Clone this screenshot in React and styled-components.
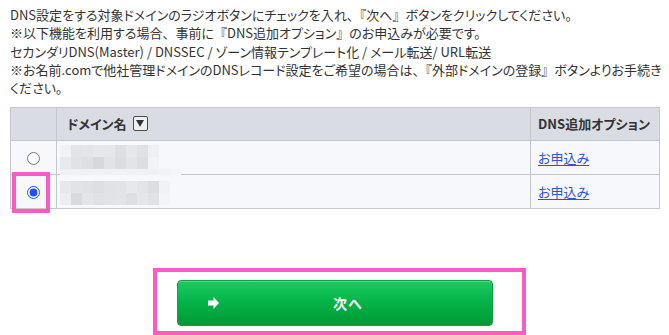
import React from "react";
import styled, { createGlobalStyle } from "styled-components";

const Global = createGlobalStyle`
  html, body { margin: 0; padding: 0; background: #fff; }
  body {
    font-family: "Noto Sans CJK JP", "Noto Sans", sans-serif;
    color: #333;
    font-feature-settings: "palt";
  }
`;

const Page = styled.div`
  width: 650px;
  padding: 6px 9px 0 10px;
`;

const Intro = styled.div`
  width: 652px;
  font-size: 13px;
  line-height: 18.3px;
  margin-bottom: 9.5px;
`;

const FullWidth = styled.span`
  font-feature-settings: normal;
`;

const Table = styled.table`
  width: 650px;
  border-collapse: collapse;
  table-layout: fixed;
  font-size: 13px;
`;

const HeadCell = styled.th`
  background: #d9dde3;
  border: 1px solid #c4c7cc;
  height: 33px;
  padding: 0 ${(p) => p.$pad || 9}px;
  text-align: left;
  font-weight: 700;
  color: #333;
  box-sizing: border-box;
  white-space: nowrap;
`;

const Cell = styled.td`
  background: #f6f8fb;
  border: 1px solid #c4c7cc;
  height: 33px;
  padding: 0 ${(p) => p.$pad ?? 9}px;
  position: relative;
  text-align: ${(p) => p.$center ? "center" : "left"};
  box-sizing: border-box;
  vertical-align: middle;
`;

const HeadLabel = styled.span`
  display: inline-flex;
  align-items: center;
  gap: 6px;
`;

const SortBox = styled.span`
  display: inline-flex;
  width: 15px;
  height: 15px;
  box-sizing: border-box;
  border: 1.5px solid #4a4a4a;
  border-radius: 2px;
  align-items: center;
  justify-content: center;
  background: #eef0f3;
`;

const Radio = styled.input`
  margin: 0;
  width: 13px;
  height: 13px;
  accent-color: #2250f4;
  vertical-align: middle;
  position: relative;
  top: -1px;
`;

const Highlight = styled.div`
  position: absolute;
  left: 1px;
  top: -3px;
  width: 38px;
  height: 41px;
  box-sizing: border-box;
  border: 4px solid #fb5bc5;
  pointer-events: none;
`;

const Mosaic = styled.div`
  display: flex;
  flex-direction: column;
  margin-top: ${(p) => p.$top}px;
  margin-bottom: ${(p) => p.$bottom}px;
  position: relative;
`;

const MosaicRow = styled.div`
  display: flex;
  height: ${(p) => p.$h}px;
`;

const Tile = styled.div`
  width: ${(p) => p.$w || 11}px;
  height: 100%;
`;

const ApplyLink = styled.a`
  color: #2f54d8;
  text-decoration: underline;
  text-underline-offset: 2px;
  cursor: pointer;
`;

const ButtonArea = styled.div`
  display: flex;
  justify-content: center;
  margin-top: 59px;
  padding-left: 9px;
`;

const Frame = styled.div`
  border: 4px solid #fb5bc5;
  padding: 8px 29px 5px 20px;
`;

const NextButton = styled.button`
  width: 316px;
  height: 46px;
  display: grid;
  grid-template-columns: 11px 1fr;
  align-items: center;
  padding: 0 15px 0 30px;
  border: 1px solid #0ea043;
  border-radius: 4px;
  background: linear-gradient(#1ecb61 0%, #05b54a 45%, #009a33 100%);
  box-shadow: inset 0 1px 0 rgba(255,255,255,0.25);
  color: #fff;
  font-family: "Noto Sans CJK JP", sans-serif;
  font-weight: 700;
  font-size: 14px;
  cursor: pointer;
`;

const ButtonText = styled.span`
  text-align: center;
  letter-spacing: 1px;
`;

const row1 = [
  { h: 12, tiles: ["#f1f2f5", "#e2e4e8", "#e3e5e9", "#e6e8eb", "#e4e6e9", "#dde0e3", "#e5e7ea", "#dfe1e5", "#eef0f3"] },
  { h: 12, tiles: ["#e7e9ec", "#e0e2e6", "#dcdfe3", "#d6d8dc", "#e1e3e7", "#dadde1", "#e2e4e7", "#dcdee2", "#f2f4f7"] },
  { h: 11, tiles: ["#eff1f5", "#eff1f5", "#eff1f5", "#eff1f5", "#eff1f5", "#eff1f5", "#eff1f5", "#eff1f5", "#eff1f5", "#f1f3f6", "#f3f5f8"] },
];
const row2 = [
  { h: 12, tiles: ["#e6e8eb", "#e1e3e7", "#dfe1e5", "#dcdee2", "#e0e2e6", "#e1e3e7", "#e6e8eb", "#e2e4e7", "#dcdee2", "#f0f2f5"] },
  { h: 12, tiles: ["#ebedf0", "#d7dade", "#e3e5e8", "#dfe1e5", "#e1e3e7", "#e2e4e8", "#dcdfe3", "#e4e6e9", "#e0e2e6", "#f2f4f7"] },
];

const DomainMosaic = ({ rows, top, bottom }) => (
  <Mosaic $top={top} $bottom={bottom}>
    {rows.map((r, i) => (
      <MosaicRow key={i} $h={r.h}>
        {r.tiles.map((c, j) => (
          <Tile key={j} style={{ background: c }} />
        ))}
      </MosaicRow>
    ))}
  </Mosaic>
);

const SortIcon = () => (
  <SortBox>
    <svg width="8" height="7" viewBox="0 0 8 7">
      <path d="M0 0 H8 L4 7 Z" fill="#333" />
    </svg>
  </SortBox>
);

const ArrowIcon = () => (
  <svg width="11" height="12" viewBox="0 0 11 12">
    <path d="M0 3.5 H5.5 V0 L11 6 L5.5 12 V8.5 H0 Z" fill="#fff" />
  </svg>
);

export default function App() {
  return (
    <>
      <Global />
      <Page>
        <Intro>
          DNS設定をする対象ドメインのラジオボタンにチェックを入れ<FullWidth>、『</FullWidth>次へ<FullWidth>』</FullWidth>ボタンをクリックしてください。
          <br />
          ※以下機能を利用する場合<FullWidth>、</FullWidth>事前に<FullWidth>『</FullWidth>DNS追加オプション<FullWidth>』</FullWidth>のお申込みが必要です。
          <br />
          セカンダリDNS(Master) / DNSSEC / ゾーン情報テンプレート化 / メール転送/ URL転送
          <br />
          ※お名前.comで他社管理ドメインのDNSレコード設定をご希望の場合は<FullWidth>、『</FullWidth>外部ドメインの登録<FullWidth>』</FullWidth>ボタンよりお手続きください。
        </Intro>
        <Table>
          <colgroup>
            <col style={{ width: 46 }} />
            <col />
            <col style={{ width: 129 }} />
          </colgroup>
          <thead>
            <tr>
              <HeadCell />
              <HeadCell $pad={10}>
                <HeadLabel>
                  ドメイン名
                  <SortIcon />
                </HeadLabel>
              </HeadCell>
              <HeadCell $pad={7}>DNS追加オプション</HeadCell>
            </tr>
          </thead>
          <tbody>
            <tr>
              <Cell $center $pad={0}>
                <Radio type="radio" name="domain" />
              </Cell>
              <Cell $pad={3}>
                <DomainMosaic rows={row1} top={4} bottom={-6} />
              </Cell>
              <Cell $pad={7}>
                <ApplyLink>お申込み</ApplyLink>
              </Cell>
            </tr>
            <tr>
              <Cell $center $pad={0}>
                <Radio type="radio" name="domain" defaultChecked />
                <Highlight />
              </Cell>
              <Cell $pad={3}>
                <DomainMosaic rows={row2} top={6} bottom={3} />
              </Cell>
              <Cell $pad={7}>
                <ApplyLink>お申込み</ApplyLink>
              </Cell>
            </tr>
          </tbody>
        </Table>
        <ButtonArea>
          <Frame>
            <NextButton type="button">
              <ArrowIcon />
              <ButtonText>次へ</ButtonText>
            </NextButton>
          </Frame>
        </ButtonArea>
      </Page>
    </>
  );
}
